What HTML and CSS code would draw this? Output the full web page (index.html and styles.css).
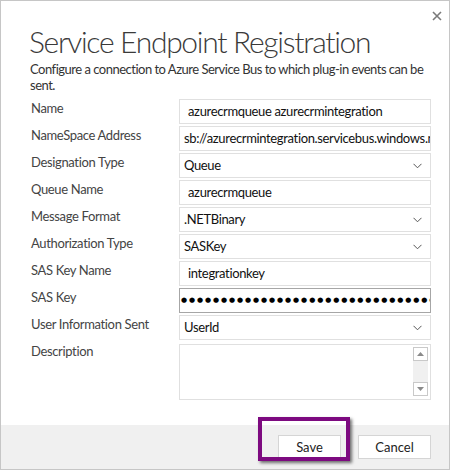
FILE: index.html
```html
<!DOCTYPE html>
<html>
<head>
<meta charset="utf-8">
<link rel="stylesheet" href="styles.css">
</head>
<body>
<div class="dialog">
  <div class="topbar">
    <svg class="close" width="10" height="10" viewBox="0 0 10 10"><path d="M1 1 L9 9 M9 1 L1 9" stroke="#7a7a7a" stroke-width="1.6" fill="none"/></svg>
  </div>
  <div class="main">
    <h1 class="title">Service Endpoint Registration</h1>
    <p class="intro">Configure a connection to Azure Service Bus to which plug-in events can be sent.</p>
    <div class="form">
      <div class="label">Name</div>
      <div class="field text pad">azurecrmqueue azurecrmintegration</div>

      <div class="label">NameSpace Address</div>
      <div class="field text">sb://azurecrmintegration.servicebus.windows.net/</div>

      <div class="label">Designation Type</div>
      <div class="field select"><span>Queue</span><svg class="chev" width="9" height="6" viewBox="0 0 9 6"><path d="M0.5 0.8 L4.5 4.8 L8.5 0.8" stroke="#555" stroke-width="1" fill="none"/></svg></div>

      <div class="label">Queue Name</div>
      <div class="field text pad">azurecrmqueue</div>

      <div class="label">Message Format</div>
      <div class="field select"><span>.NETBinary</span><svg class="chev" width="9" height="6" viewBox="0 0 9 6"><path d="M0.5 0.8 L4.5 4.8 L8.5 0.8" stroke="#555" stroke-width="1" fill="none"/></svg></div>

      <div class="label">Authorization Type</div>
      <div class="field select"><span>SASKey</span><svg class="chev" width="9" height="6" viewBox="0 0 9 6"><path d="M0.5 0.8 L4.5 4.8 L8.5 0.8" stroke="#555" stroke-width="1" fill="none"/></svg></div>

      <div class="label">SAS Key Name</div>
      <div class="field text pad">integrationkey</div>

      <div class="label">SAS Key</div>
      <div class="field text password">●●●●●●●●●●●●●●●●●●●●●●●●●●●●●●●●●●●●●●●●</div>

      <div class="label">User Information Sent</div>
      <div class="field select"><span>UserId</span><svg class="chev" width="9" height="6" viewBox="0 0 9 6"><path d="M0.5 0.8 L4.5 4.8 L8.5 0.8" stroke="#555" stroke-width="1" fill="none"/></svg></div>

      <div class="label">Description</div>
      <div class="field textarea">
        <div class="scroll">
          <div class="sbtn"><svg width="7" height="4" viewBox="0 0 7 4"><path d="M0 4 L3.5 0 L7 4 Z" fill="#8a8a8a"/></svg></div>
          <div class="sbtn"><svg width="7" height="4" viewBox="0 0 7 4"><path d="M0 0 L3.5 4 L7 0 Z" fill="#8a8a8a"/></svg></div>
        </div>
      </div>
    </div>
  </div>
  <div class="footer">
    <div class="btn save">Save</div>
    <div class="btn cancel">Cancel</div>
  </div>
  <div class="highlight"></div>
</div>
</body>
</html>
```
FILE: styles.css
```css
html, body {
  margin: 0;
  padding: 0;
  background: #ffffff;
}
.dialog {
  position: relative;
  width: 450px;
  height: 470px;
  box-sizing: border-box;
  border: 1px solid #c6c6c6;
  display: flex;
  flex-direction: column;
  font-family: "Lato", "Open Sans", sans-serif;
  color: #444;
  background: #fff;
}
.topbar {
  height: 21px;
  display: flex;
  justify-content: flex-end;
  align-items: flex-start;
  padding: 10px 7px 0 0;
  box-sizing: border-box;
}
.close {
  display: block;
}
.main {
  flex: 1;
  padding: 0 18px 0 28px;
}
.title {
  margin: 0;
  font-weight: 300;
  font-size: 30px;
  line-height: 38px;
  letter-spacing: -1.3px;
  color: #3a3a3a;
  white-space: nowrap;
}
.intro {
  margin: 1px 0 0 0;
  font-size: 13px;
  line-height: 16px;
  letter-spacing: -0.5px;
  color: #333;
  padding-left: 1px;
}
.form {
  margin-top: 6px;
  display: grid;
  grid-template-columns: 150px 1fr;
  grid-auto-rows: 25px;
  row-gap: 2px;
  font-size: 13px;
  letter-spacing: -0.35px;
}
.label {
  padding: 1px 0 0 2px;
  line-height: 16px;
  color: #444;
  white-space: nowrap;
}
.field {
  box-sizing: border-box;
  border: 1px solid #e0e0e0;
  background: #fff;
  color: #111;
  line-height: 23px;
  white-space: nowrap;
  overflow: hidden;
  padding-left: 4px;
}
.field.pad {
  padding-left: 8px;
}
.field.select {
  display: flex;
  justify-content: space-between;
  align-items: center;
  padding-right: 8px;
}
.chev {
  display: block;
}
.field.password {
  border-color: #a6a6a6;
  font-family: "DejaVu Sans", sans-serif;
  font-size: 7px;
  letter-spacing: 1.9px;
  padding-left: 1px;
  color: #000;
}
.field.textarea {
  grid-row: span 2;
  height: 56px;
  margin-top: 2px;
  display: flex;
  justify-content: flex-end;
  padding: 2px 2px 3px 0;
}
.scroll {
  width: 15px;
  background: #f0f0f0;
  display: flex;
  flex-direction: column;
  justify-content: space-between;
}
.sbtn {
  box-sizing: border-box;
  height: 14px;
  width: 15px;
  border: 1px solid #c9c9c9;
  background: #fff;
  display: flex;
  align-items: center;
  justify-content: center;
}
.sbtn svg {
  display: block;
}
.footer {
  height: 44px;
  background: #f0f0f0;
  display: flex;
  justify-content: flex-end;
  align-items: flex-start;
  padding: 10px 18px 0 0;
  box-sizing: border-box;
  gap: 17px;
}
.btn {
  box-sizing: border-box;
  height: 24px;
  border: 1px solid #d5d5d5;
  background: #fff;
  color: #222;
  font-size: 13px;
  line-height: 22px;
  text-align: center;
}
.save {
  width: 63px;
}
.cancel {
  width: 73px;
}
.highlight {
  position: absolute;
  left: 257px;
  top: 416px;
  width: 92px;
  height: 44px;
  box-sizing: border-box;
  border: 4px solid #7d0a80;
  box-shadow: 2px 2px 3px rgba(0, 0, 0, 0.55);
}
```
